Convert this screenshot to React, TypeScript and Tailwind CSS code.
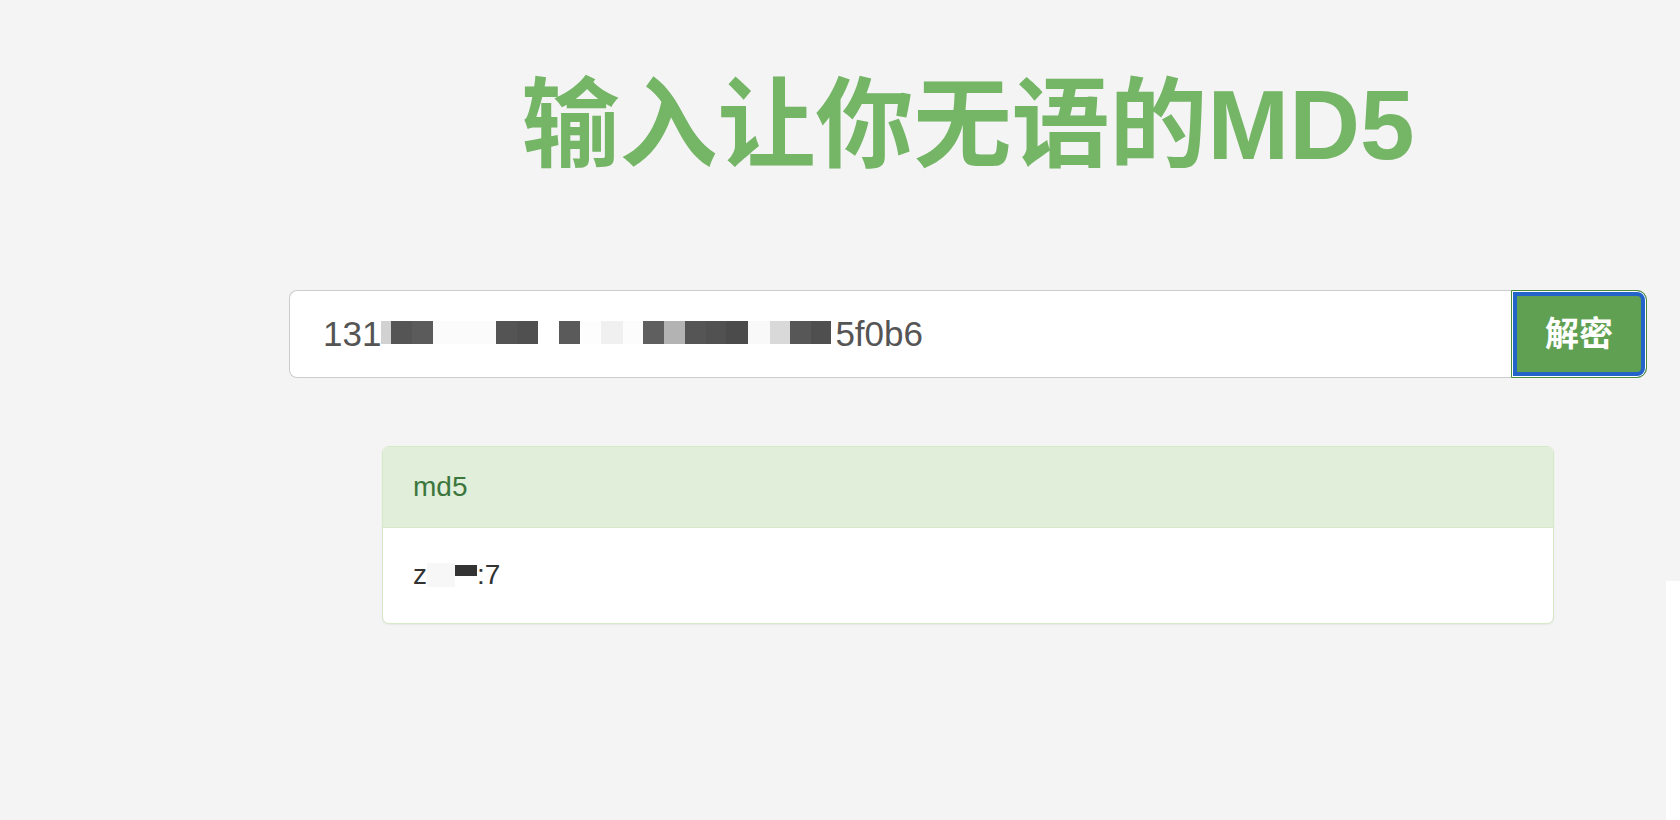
const inputMosaic: [number, string][] = [
  [10, "#d2d2d2"],
  [21, "#555555"],
  [21, "#5b5b5b"],
  [63, "#fbfbfb"],
  [21, "#545454"],
  [21, "#505050"],
  [21, "#ffffff"],
  [21, "#5a5a5a"],
  [21, "#fdfdfd"],
  [22, "#f0f0f0"],
  [20, "#fcfcfc"],
  [21, "#5f5f5f"],
  [21, "#b3b3b3"],
  [21, "#555555"],
  [20, "#515151"],
  [22, "#4b4b4b"],
  [22, "#f9f9f9"],
  [20, "#d9d9d9"],
  [21, "#575757"],
  [20, "#4f4f4f"],
];

function App() {
  return (
    <div className="relative min-h-screen bg-[#f4f4f4] font-['Liberation_Sans','Noto_Sans_CJK_SC',sans-serif]">
      <main className="ml-[289px] w-[1358px] pt-[75px]">
        <h1 className="text-center text-[98px] leading-[100px] font-semibold text-[#74b566]">
          输入让你无语的MD5
        </h1>

        <div className="mt-[115px] flex h-[88px]">
          <div className="flex flex-1 items-center rounded-l-[8px] border border-r-0 border-[#cccccc] bg-white pl-[33px] text-[35px] leading-[40px] text-[#555555]">
            <span>131</span>
            {inputMosaic.map(([w, c], i) => (
              <span
                key={i}
                className="inline-block h-[23px] self-center"
                style={{ width: w, background: c, marginTop: -4 }}
              />
            ))}
            <span className="ml-[4px]">5f0b6</span>
          </div>
          <button className="flex w-[136px] items-center justify-center rounded-r-[10px] border border-[#4b8a3f] bg-[#5fa052] text-[34px] font-bold text-white shadow-[inset_0_0_0_1px_#ffffff,inset_0_0_0_5px_#2463c9]">
            解密
          </button>
        </div>

        <section className="mx-[93px] mt-[68px] overflow-hidden rounded-[7px] border border-[#d6e9c6] bg-white shadow-[0_1px_2px_rgba(0,0,0,0.06)]">
          <div className="border-b border-[#d6e9c6] bg-[#e0eeda] px-[30px] py-[20px] text-[28px] leading-[40px] text-[#3c763d]">
            md5
          </div>
          <div className="flex items-center px-[30px] pt-[27px] pb-[28px] text-[28px] leading-[40px] text-[#333333]">
            <span>z</span>
            <span className="inline-block h-[24px] w-[28px] bg-[#f7f7f7]" />
            <span className="mb-[10px] inline-block h-[11px] w-[22px] bg-[#333333]" />
            <span>:7</span>
          </div>
        </section>
      </main>
      <div className="absolute top-[581px] right-0 bottom-0 w-[14px] bg-white" />
    </div>
  );
}

export default App;
